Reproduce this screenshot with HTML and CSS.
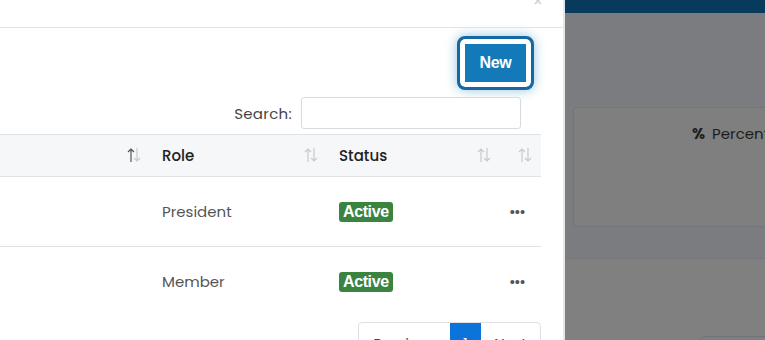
FILE: index.html
```html
<!DOCTYPE html>
<html lang="en">
<head>
    <meta charset="UTF-8">
    <meta name="viewport" content="width=device-width, initial-scale=1.0">
    <title>Members</title>
    <link rel="stylesheet" href="styles.css">
</head>
<body>
    <div class="modal">
        <div class="modal-header">
            <span class="close">&times;</span>
        </div>
        <div class="modal-body">
            <div class="toolbar">
                <button class="btn-new">New</button>
            </div>
            <div class="search-row">
                <label for="search">Search:</label>
                <input id="search" type="text">
            </div>
            <table class="members">
                <thead>
                    <tr>
                        <th class="col-name"><svg class="sort asc" viewBox="0 0 14 16"><path class="up" d="M4 15V2M1 5l3-3 3 3"/><path d="M10 1v13M7 11l3 3 3-3"/></svg></th>
                        <th class="col-role">Role<svg class="sort" viewBox="0 0 14 16"><path d="M4 15V2M1 5l3-3 3 3"/><path d="M10 1v13M7 11l3 3 3-3"/></svg></th>
                        <th class="col-status">Status<svg class="sort" viewBox="0 0 14 16"><path d="M4 15V2M1 5l3-3 3 3"/><path d="M10 1v13M7 11l3 3 3-3"/></svg></th>
                        <th class="col-act"><svg class="sort" viewBox="0 0 14 16"><path d="M4 15V2M1 5l3-3 3 3"/><path d="M10 1v13M7 11l3 3 3-3"/></svg></th>
                    </tr>
                </thead>
                <tbody>
                    <tr>
                        <td></td>
                        <td>President</td>
                        <td><span class="badge">Active</span></td>
                        <td class="dots">&bull;&bull;&bull;</td>
                    </tr>
                    <tr>
                        <td></td>
                        <td>Member</td>
                        <td><span class="badge">Active</span></td>
                        <td class="dots">&bull;&bull;&bull;</td>
                    </tr>
                </tbody>
            </table>
            <div class="pager">
                <ul class="pagination">
                    <li class="prev">Previous</li>
                    <li class="active">1</li>
                    <li class="next">Next</li>
                </ul>
            </div>
        </div>
    </div>
    <div class="backdrop">
        <div class="topbar"></div>
        <div class="card">
            <div class="card-title"><span class="pct">%</span>Percentage</div>
        </div>
        <div class="lower">
            <div class="lower-box"></div>
        </div>
    </div>
</body>
</html>
```

FILE: styles.css
```css
body {
    margin: 0;
    height: 340px;
    overflow: hidden;
    display: flex;
    font-family: 'Poppins', 'Inter', sans-serif;
    background-color: #7b7c80;
}
.modal {
    width: 563px;
    flex-shrink: 0;
    background: #fff;
    border-right: 2px solid #e4e6e8;
}
.modal-header {
    height: 27px;
    border-bottom: 1px solid #dde3e7;
    position: relative;
}
.close {
    position: absolute;
    right: 20px;
    top: -11px;
    color: #d0d0d0;
    font-size: 16px;
}
.modal-body {
    width: 541px;
}
.toolbar {
    display: flex;
    justify-content: flex-end;
    padding: 8px 7px 0 0;
}
.btn-new {
    width: 77px;
    height: 54px;
    background: #1379b8;
    color: #fff;
    font-family: 'Liberation Sans', Arial, sans-serif;
    font-weight: bold;
    font-size: 16px;
    border: 3px solid #1668a3;
    border-radius: 8px;
    box-shadow: inset 0 0 0 5px #fff, 0 0 12px rgba(19, 121, 184, 0.45);
    padding: 0;
    letter-spacing: -0.3px;
}
.search-row {
    display: flex;
    justify-content: flex-end;
    align-items: center;
    gap: 9px;
    padding: 7px 20px 0 0;
    font-size: 15px;
    color: #444;
}
.search-row label {
    letter-spacing: 0.3px;
}
.search-row input {
    width: 220px;
    height: 32px;
    box-sizing: border-box;
    border: 1px solid #d5dbe0;
    border-radius: 3px;
    margin: 0;
}
.members {
    width: 541px;
    margin-top: 5px;
    border-collapse: collapse;
    font-size: 15px;
}
.members th {
    height: 41px;
    background: #f5f7f9;
    border-top: 1px solid #dde3e7;
    border-bottom: 1px solid #dde3e7;
    text-align: left;
    font-weight: 500;
    color: #222;
    position: relative;
    padding: 0 0 0 12px;
}
.col-name { width: 138px; }
.col-role { width: 165px; }
.col-status { width: 161px; }
.sort {
    position: absolute;
    right: 9px;
    top: 12px;
    width: 14px;
    height: 16px;
    fill: none;
    stroke: #c6cbd0;
    stroke-width: 1.2;
}
.sort.asc .up {
    stroke: #555;
}
.members td {
    height: 69px;
    border-bottom: 1px solid #dde3e7;
    padding: 0 0 0 12px;
    color: #555;
}
.members tbody tr:last-child td {
    border-bottom: none;
}
.badge {
    display: inline-block;
    background: #3b843f;
    color: #fff;
    font-family: 'Liberation Sans', Arial, sans-serif;
    font-weight: bold;
    font-size: 16px;
    line-height: 18px;
    padding: 1px 4px;
    border-radius: 3px;
    letter-spacing: -0.4px;
}
.dots {
    color: #111;
    font-size: 16px;
    letter-spacing: -1.5px;
    padding-left: 9px !important;
}
.pager {
    display: flex;
    justify-content: flex-end;
    margin-top: 6px;
}
.pagination {
    display: flex;
    list-style: none;
    margin: 0;
    padding: 0;
    border: 1px solid #dee2e6;
    border-radius: 4px;
    font-size: 15px;
    color: #444;
}
.pagination li {
    padding: 9px 0;
    box-sizing: border-box;
    text-align: center;
}
.pagination .prev {
    width: 91px;
}
.pagination .active {
    background: #0a74da;
    color: #fff;
    width: 31px;
}
.pagination .next {
    width: 59px;
}
.backdrop {
    flex: 1;
    display: flex;
    flex-direction: column;
}
.topbar {
    height: 13px;
    background: #073a5c;
}
.card {
    margin: 94px 0 0 8px;
    height: 118px;
    background: #7f7f7f;
    border: 1px solid #737579;
    border-right: none;
    border-radius: 4px 0 0 4px;
}
.card-title {
    padding: 14px 0 0 118px;
    font-size: 15px;
    color: #1c1c1c;
    white-space: nowrap;
}
.pct {
    font-weight: bold;
    margin-right: 7px;
}
.lower {
    margin-top: 31px;
    flex: 1;
    background: #808080;
    border-top: 1px solid #77787b;
    position: relative;
}
.lower-box {
    position: absolute;
    left: 136px;
    top: 77px;
    width: 100px;
    height: 20px;
    border: 1px solid #6e7478;
    border-radius: 3px;
}
```
